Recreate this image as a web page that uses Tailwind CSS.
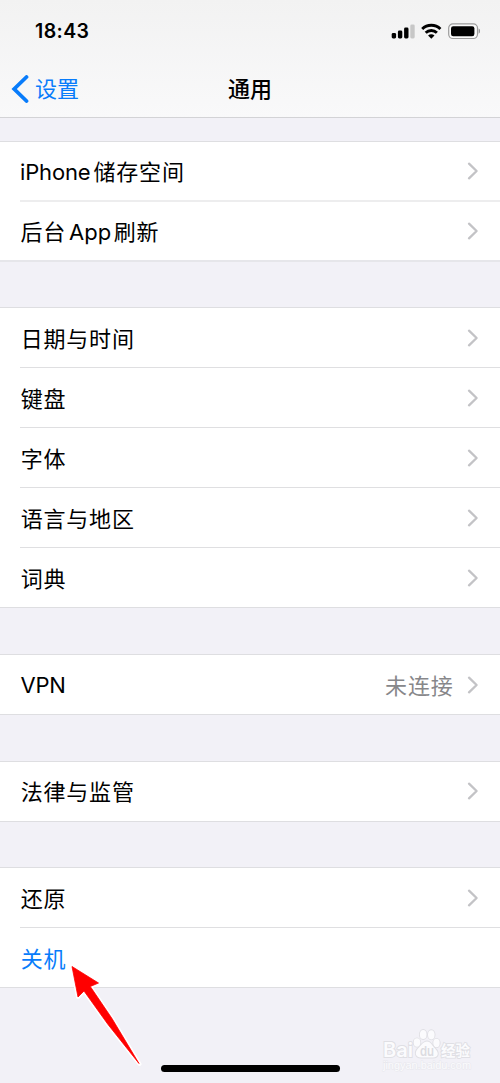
<!DOCTYPE html>
<html lang="zh-CN">
<head>
<meta charset="utf-8">
<title>通用</title>
<script src="https://cdn.jsdelivr.net/npm/@tailwindcss/browser@4"></script>
</head>
<body class="bg-[#f2f1f7]">
<svg class="hidden"><symbol id="chev" viewBox="0 0 12 18"><path d="M2 1.700 9.600 9 2 16.300" fill="none" stroke="#c3c3c6" stroke-width="2.300" stroke-linecap="round" stroke-linejoin="round"/></symbol></svg>
<div class="relative flex h-[1083px] w-[500px] flex-col overflow-hidden bg-[#f2f1f7] font-['Inter','Noto_Sans_CJK_SC',sans-serif] text-[22px] text-black">
  <header class="h-[118px] shrink-0 border-b border-[#d3d3d6] bg-linear-to-b from-[#f2f2f2] to-[#f9f9fa]">
    <div class="flex h-[62px] items-center justify-between pl-[35px] pr-[20px]">
      <span class="pt-[2px] text-[19.5px] font-semibold tracking-[0.4px]">18:43</span>
      <div class="flex items-center">
        <svg class="h-[20px] w-[90px]" viewBox="0 0 90 20">
          <rect x="1.700" y="12" width="4.400" height="5.500" rx="1.400"/>
          <rect x="7.900" y="9.500" width="4.400" height="8" rx="1.400"/>
          <rect x="14.100" y="6.500" width="4.400" height="11" rx="1.400"/>
          <rect x="20.300" y="3.500" width="4.400" height="14" rx="1.400" fill="#c7c7c7"/>
          <g fill="none" stroke="#000" stroke-width="2.900"><path d="M32.200 8a13 13 0 0 1 18.200 0"/><path d="M35.700 11.800a8 8 0 0 1 11.200 0"/></g>
          <path d="M38.100 14.500a4.600 4.600 0 0 1 6.400 0L41.300 17.700z"/>
          <rect x="58.700" y="2.900" width="28.800" height="14.600" rx="4.200" fill="#fafafa" stroke="#9b9b9b" stroke-width="1.200"/>
          <rect x="61" y="5.300" width="23.400" height="10" rx="2.200"/>
          <path d="M88.600 7.600q1.600.8 1.600 2.600t-1.600 2.600z" fill="#999"/>
        </svg>
      </div>
    </div>
    <div class="grid h-[53px] grid-cols-3 items-center">
      <div class="flex items-center gap-[6px] pl-[11px] text-[#087cfb]">
        <svg class="h-[28px] w-[18px]" viewBox="0 0 18 28"><path d="M15.500 2 3.200 14l12.300 12" fill="none" stroke="#087cfb" stroke-width="3.800" stroke-linecap="round" stroke-linejoin="miter"/></svg>
        <span class="pt-[2px]">设置</span>
      </div>
      <h1 class="pt-px text-center font-medium">通用</h1>
    </div>
  </header>

  <main>
    <section class="mt-[23px] border-t border-[#dedee1] bg-white">
      <div class="relative flex h-[60px] items-center pr-[21px] pb-[2px] pl-[20px]">
        <span class="grow pt-[2px] leading-[30px]"><span class="tracking-[-0.15px]">iPhone</span><span class="ml-[3px] tracking-[0.8px]">储存空间</span></span><svg class="h-[18px] w-[12px]"><use href="#chev"/></svg>
        <i class="absolute right-0 bottom-0 left-[20px] h-[2px] bg-[#ededee]"></i>
      </div>
      <div class="flex h-[60px] items-center border-b-2 border-[#e6e6ea] pr-[21px] pl-[20.500px]">
        <span class="grow pt-[2px] leading-[30px]"><span class="tracking-[0.8px]">后台</span><span class="ml-[3px]">App</span><span class="ml-[2.500px] tracking-[0.8px]">刷新</span></span><svg class="h-[18px] w-[12px]"><use href="#chev"/></svg>
      </div>
    </section>

    <section class="mt-[45px] border-t border-[#dedee1] bg-white tracking-[0.8px]">
      <div class="ml-[20px] flex h-[60px] items-center border-b border-[#dfdfe1] pr-[21px] pl-[0.700px]"><span class="grow pt-[4px]">日期与时间</span><svg class="h-[18px] w-[12px]"><use href="#chev"/></svg></div>
      <div class="ml-[20px] flex h-[60px] items-center border-b border-[#dfdfe1] pr-[21px] pl-[0.700px]"><span class="grow pt-[4px]">键盘</span><svg class="h-[18px] w-[12px]"><use href="#chev"/></svg></div>
      <div class="ml-[20px] flex h-[60px] items-center border-b border-[#dfdfe1] pr-[21px] pl-[0.700px]"><span class="grow pt-[4px]">字体</span><svg class="h-[18px] w-[12px]"><use href="#chev"/></svg></div>
      <div class="ml-[20px] flex h-[60px] items-center border-b border-[#dfdfe1] pr-[21px] pl-[0.700px]"><span class="grow pt-[4px]">语言与地区</span><svg class="h-[18px] w-[12px]"><use href="#chev"/></svg></div>
      <div class="flex h-[60px] items-center border-b border-[#dedee1] pr-[21px] pl-[20.700px]"><span class="grow pt-[4px]">词典</span><svg class="h-[18px] w-[12px]"><use href="#chev"/></svg></div>
    </section>

    <section class="mt-[46px] border-y border-[#dedee1] bg-white">
      <div class="flex h-[59px] items-center pr-[21px] pl-[20.500px]"><span class="grow pt-[2px] tracking-[-0.3px]">VPN</span><span class="mr-[13.500px] pt-[3px] tracking-[0.8px] text-[#87878a]">未连接</span><svg class="h-[18px] w-[12px]"><use href="#chev"/></svg></div>
    </section>

    <section class="mt-[46px] border-y border-[#dedee1] bg-white tracking-[0.8px]">
      <div class="flex h-[59px] items-center pr-[21px] pb-px pl-[20.700px]"><span class="grow pt-[3px]">法律与监管</span><svg class="h-[18px] w-[12px]"><use href="#chev"/></svg></div>
    </section>

    <section class="mt-[45px] border-y border-[#dedee1] bg-white tracking-[0.8px]">
      <div class="ml-[20px] flex h-[60px] items-center border-b border-[#dfdfe1] pr-[21px] pl-[0.700px]"><span class="grow pt-[4px]">还原</span><svg class="h-[18px] w-[12px]"><use href="#chev"/></svg></div>
      <div class="flex h-[59px] items-center pt-[3px] pl-[20.700px] text-[#087cfb]">关机</div>
    </section>
  </main>

  <svg class="absolute top-[955px] left-[60px] h-[120px] w-[90px]" viewBox="60 955 90 120">
    <path d="M72 966.500 98.500 983 90.300 986.500 112 1018.500 139.500 1064 108 1024.500 84 991L78 997z" fill="#fff" stroke="#fff" stroke-width="4" stroke-linejoin="round"/>
    <path d="M72 966.500 98.500 983 90.300 986.500 112 1018.500 139 1063.500 108 1024.500 84 991 78 997z" fill="#f00" stroke="#f00" stroke-linejoin="round" stroke-width=".8"/>
  </svg>
  <div class="absolute top-[1065px] left-[161px] h-[7px] w-[179px] rounded-full bg-black"></div>

  <div class="absolute top-[1025px] left-[380px] h-[50px] w-[100px]">
    <svg class="h-[50px] w-[100px]" viewBox="0 0 100 50" fill="#fbfbfd" stroke="#dfdfe4" stroke-width="1.800" paint-order="stroke">
      <text x="3" y="31.500" font-size="20" font-family="Inter, sans-serif" font-weight="600" textLength="30" lengthAdjust="spacingAndGlyphs">Bai</text>
      <ellipse cx="37" cy="17.500" rx="3.300" ry="4.200"/><ellipse cx="43.200" cy="9.500" rx="3.300" ry="4.600"/><ellipse cx="51.300" cy="9.800" rx="3.300" ry="4.600"/><ellipse cx="56.500" cy="18" rx="3.200" ry="4.200"/>
      <path d="M47 16.500c4 0 5 4.500 8 7 4 3.500 4 9-2 9H41c-6 0-6.500-5.500-3-9 3-2.500 5-7 9-7z"/>
      <text x="40" y="31" font-family="Inter, sans-serif" font-size="13" font-weight="600" fill="#dcdce1" stroke="none" textLength="14" lengthAdjust="spacingAndGlyphs">du</text>
      <text x="61" y="30.500" font-family="Noto Sans CJK SC, sans-serif" font-size="15" font-weight="700" textLength="29" lengthAdjust="spacingAndGlyphs">经验</text>
      <text x="3" y="44" font-family="Liberation Sans, sans-serif" font-size="10" stroke-width="1" stroke="#e8e8ed" textLength="88" lengthAdjust="spacingAndGlyphs">jingyan.baidu.com</text>
    </svg>
  </div>
</div>
</body>
</html>
